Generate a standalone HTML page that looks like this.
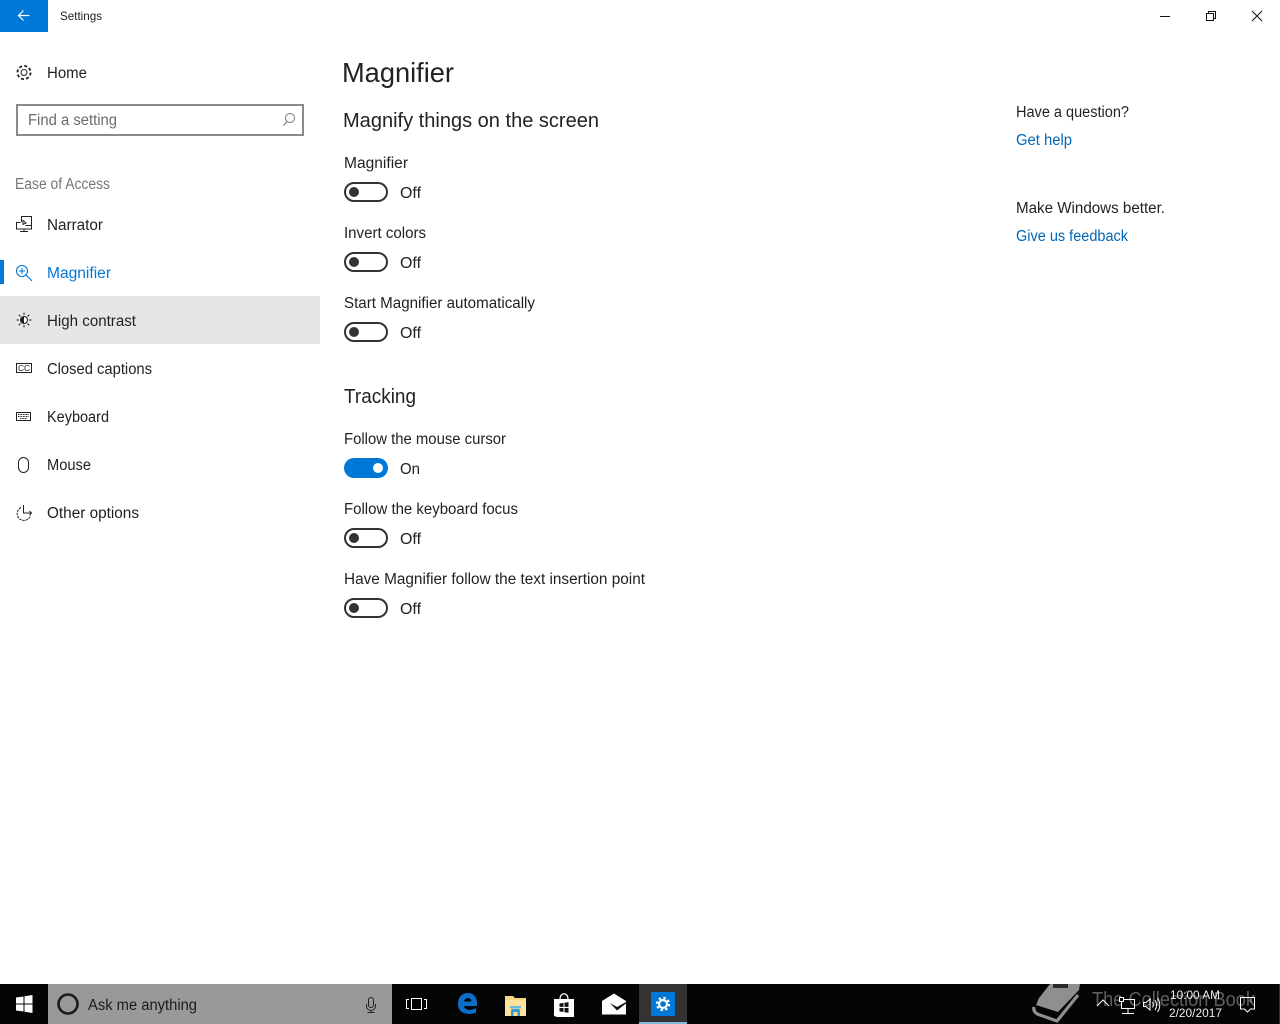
<!DOCTYPE html>
<html lang="en"><head><meta charset="utf-8"><title>Settings</title>
<style>
html,body{margin:0;padding:0;background:#fff;width:1280px;height:1024px;overflow:hidden}
svg{display:block;font-family:"Liberation Sans",sans-serif;font-size:15.5px;fill:#222}
.i{fill:none;stroke:#222;stroke-width:1}
.w{fill:none;stroke:#fff;stroke-width:1}
.off{fill:none;stroke:#333;stroke-width:2}
</style></head><body>
<svg width="1280" height="1024" viewBox="0 0 1280 1024" xmlns="http://www.w3.org/2000/svg">
<!-- title bar -->
<rect width="48" height="32" fill="#0078d7"/>
<path d="M29.500 15.500H18.500M23.500 10.500L18.500 15.500L23.500 20.500" fill="none" stroke="#fff" stroke-width="1.200"/>
<text x="60" y="20" font-size="12" textLength="42" lengthAdjust="spacingAndGlyphs">Settings</text>
<path d="M1160 16.500H1170" stroke="#111" stroke-width="1"/>
<path d="M1206.500 13.500h7v7h-7zM1208.500 13.500v-2h7v7h-2" fill="none" stroke="#111" stroke-width="1"/>
<path d="M1252 11l10 10M1262 11l-10 10" stroke="#111" stroke-width="1"/>
<!-- nav -->
<circle cx="24" cy="72.500" r="6.600" fill="none" stroke="#222" stroke-width="1.800" stroke-dasharray="3 2.180"/>
<circle cx="24" cy="72.500" r="3" class="i"/>
<text x="47" y="78" textLength="40" lengthAdjust="spacingAndGlyphs">Home</text>
<rect x="17" y="105" width="286" height="30" fill="#fff" stroke="#8a8a8a" stroke-width="2"/>
<text x="28" y="125" fill="#6b6b6b" textLength="89" lengthAdjust="spacingAndGlyphs">Find a setting</text>
<circle cx="290" cy="118" r="4.500" fill="none" stroke="#777"/><path d="M287 121.500L283.500 125.500" stroke="#777"/>
<text x="15" y="189" fill="#767676" textLength="95" lengthAdjust="spacingAndGlyphs">Ease of Access</text>

<path d="M21.500 222v-5.500h10v9h-6" class="i"/>
<path d="M20.500 222.500h-4v6.500h15v-3M24 229v2.500M20 231.500h8M23 220.500l3 2.500-3 1.500z" class="i"/>
<text x="47" y="230" textLength="56" lengthAdjust="spacingAndGlyphs">Narrator</text>

<rect x="0" y="260" width="4" height="24" fill="#0078d7"/>
<circle cx="22" cy="271" r="5.500" fill="none" stroke="#0078d7" stroke-width="1.100"/>
<path d="M19 271h6M22 268v6M26 275l6 6" fill="none" stroke="#0078d7" stroke-width="1.100"/>
<text x="47" y="278" fill="#0078d7" textLength="64" lengthAdjust="spacingAndGlyphs">Magnifier</text>

<rect x="0" y="296" width="320" height="48" fill="#e6e6e6"/>
<circle cx="24" cy="320" r="3.500" fill="#fff" stroke="#222"/><path d="M24 316.500a3.500 3.500 0 0 0 0 7z" fill="#222"/>
<path d="M24 312.500v2.500M24 325v2.500M16.500 320h2.500M29 320h2.500M18.700 314.700l1.800 1.800M27.500 323.500l1.800 1.800M18.700 325.300l1.800-1.800M27.500 316.500l1.800-1.800" stroke="#222" stroke-width="1"/>
<text x="47" y="326" textLength="89" lengthAdjust="spacingAndGlyphs">High contrast</text>

<rect x="16.500" y="363.500" width="15" height="9" class="i"/>
<text x="18" y="371" font-size="8" textLength="12" lengthAdjust="spacingAndGlyphs">CC</text>
<text x="47" y="374" textLength="105" lengthAdjust="spacingAndGlyphs">Closed captions</text>

<rect x="16.500" y="412.500" width="14" height="8" class="i"/>
<path d="M18 414.500h11M18 416.500h11M20 418.500h7" stroke="#222" stroke-dasharray="1 .6"/>
<text x="47" y="422" textLength="62" lengthAdjust="spacingAndGlyphs">Keyboard</text>

<rect x="18.500" y="457.500" width="10" height="15" rx="5" class="i"/>
<text x="47" y="470" textLength="44" lengthAdjust="spacingAndGlyphs">Mouse</text>

<path d="M21 507.500a6.800 6.800 0 1 0 9.500 8" class="i" stroke-dasharray="2.500 .8"/>
<path d="M23.500 505v8h8M29.500 511l2 2-2 2" class="i"/>
<text x="47" y="518" textLength="92" lengthAdjust="spacingAndGlyphs">Other options</text>

<!-- main -->
<text x="342" y="82" font-size="28" textLength="112" lengthAdjust="spacingAndGlyphs">Magnifier</text>
<text x="343" y="127" font-size="20" textLength="256" lengthAdjust="spacingAndGlyphs">Magnify things on the screen</text>

<text x="344" y="168" textLength="64" lengthAdjust="spacingAndGlyphs">Magnifier</text>
<rect x="345" y="183" width="42" height="18" rx="9" class="off"/><circle cx="354" cy="192" r="5" fill="#333"/>
<text x="400" y="198" textLength="21" lengthAdjust="spacingAndGlyphs">Off</text>

<text x="344" y="238" textLength="82" lengthAdjust="spacingAndGlyphs">Invert colors</text>
<rect x="345" y="253" width="42" height="18" rx="9" class="off"/><circle cx="354" cy="262" r="5" fill="#333"/>
<text x="400" y="268" textLength="21" lengthAdjust="spacingAndGlyphs">Off</text>

<text x="344" y="308" textLength="191" lengthAdjust="spacingAndGlyphs">Start Magnifier automatically</text>
<rect x="345" y="323" width="42" height="18" rx="9" class="off"/><circle cx="354" cy="332" r="5" fill="#333"/>
<text x="400" y="338" textLength="21" lengthAdjust="spacingAndGlyphs">Off</text>

<text x="344" y="403" font-size="20" textLength="72" lengthAdjust="spacingAndGlyphs">Tracking</text>

<text x="344" y="444" textLength="162" lengthAdjust="spacingAndGlyphs">Follow the mouse cursor</text>
<rect x="344" y="458" width="44" height="20" rx="10" fill="#0078d7"/><circle cx="378" cy="468" r="5" fill="#fff"/>
<text x="400" y="474" textLength="20" lengthAdjust="spacingAndGlyphs">On</text>

<text x="344" y="514" textLength="174" lengthAdjust="spacingAndGlyphs">Follow the keyboard focus</text>
<rect x="345" y="529" width="42" height="18" rx="9" class="off"/><circle cx="354" cy="538" r="5" fill="#333"/>
<text x="400" y="544" textLength="21" lengthAdjust="spacingAndGlyphs">Off</text>

<text x="344" y="584" textLength="301" lengthAdjust="spacingAndGlyphs">Have Magnifier follow the text insertion point</text>
<rect x="345" y="599" width="42" height="18" rx="9" class="off"/><circle cx="354" cy="608" r="5" fill="#333"/>
<text x="400" y="614" textLength="21" lengthAdjust="spacingAndGlyphs">Off</text>

<!-- right -->
<text x="1016" y="117" textLength="113" lengthAdjust="spacingAndGlyphs">Have a question?</text>
<text x="1016" y="145" fill="#0067b8" textLength="56" lengthAdjust="spacingAndGlyphs">Get help</text>
<text x="1016" y="213" textLength="149" lengthAdjust="spacingAndGlyphs">Make Windows better.</text>
<text x="1016" y="241" fill="#0067b8" textLength="112" lengthAdjust="spacingAndGlyphs">Give us feedback</text>

<!-- taskbar -->
<rect y="984" width="1280" height="40" fill="#050508"/>
<path d="M16 997.500l7.500-1v7h-7.500zM24.500 996.300l8-1.300v8.500h-8zM16 1004.500h7.500v7l-7.500-1zM24.500 1004.500h8v8.500l-8-1.300z" fill="#fff"/>
<rect x="48" y="984" width="344" height="40" fill="#999"/>
<circle cx="68" cy="1004" r="9.500" fill="none" stroke="#1c1c1c" stroke-width="2.600"/>
<text x="88" y="1010" fill="#1a1a1a" textLength="109" lengthAdjust="spacingAndGlyphs">Ask me anything</text>
<rect x="368.500" y="997.500" width="5" height="10" rx="2.500" fill="none" stroke="#222"/>
<path d="M366.500 1004v2a4.500 4.500 0 0 0 9 0v-2M371 1010.500v2M367.500 1012.500h7" fill="none" stroke="#222"/>

<path d="M411.500 998.500h10v11h-10z" class="w"/>
<path d="M409 999.500h-2.500v9h2.500M424 999.500h2.500v9H424" class="w"/>

<path d="M458 1004c0-7 4-11 10-11 6 0 9 4.500 9 10.500v2.500h-13c.3 3.500 6 5.500 12 2v4.600c-8 3.200-18 1-18-8.600zm6-2.500h7.500c-.3-4.500-6.700-4.500-7.500 0z" fill="#0a6ec9" fill-rule="evenodd"/>

<path d="M505 996h8l2 2h11v18h-21z" fill="#f5d77f"/>
<rect x="505" y="1000" width="21" height="16" fill="#fbe39a"/>
<path d="M511 1016v-5a2 2 0 0 1 2-2h5a2 2 0 0 1 2 2v5h-2.500v-4h-4v4z" fill="#3c9ad0"/>
<rect x="510" y="1006" width="11" height="2.500" fill="#6dbbdc"/>

<path d="M554 999h20v18l-17 0-3-1z" fill="#fff"/>
<path d="M560 999c0-7 8-7 8 0" fill="none" stroke="#fff" stroke-width="1.200"/>
<path d="M559.500 1003.500l4-.6v4h-4zM564.500 1002.700l4-.6v4.800h-4zM559.500 1008h4v4l-4-.6zM564.500 1008h4v4.800l-4-.6z" fill="#111"/>

<path d="M602 1001l12-7.500 12 7.500v13.500h-24z" fill="#fff"/>
<path d="M610 1003l7 4 9-5v1.500l-9 7z" fill="#111"/>

<rect x="639" y="984" width="48" height="40" fill="#333336"/>
<rect x="651" y="992" width="24" height="24" fill="#0078d7"/>
<circle cx="663" cy="1004" r="4" fill="none" stroke="#fff" stroke-width="2.200"/>
<circle cx="663" cy="1004" r="6.200" fill="none" stroke="#fff" stroke-width="2" stroke-dasharray="2.400 2.500"/>
<rect x="639" y="1022" width="48" height="2" fill="#86b9e0"/>

<!-- watermark -->
<path d="M1050 984h30l-1 6-21 22-22-7 3-7z" fill="#8f8f8f"/>
<rect x="1053" y="984" width="15" height="4" fill="#2a2a2a"/>
<path d="M1034 1007c-1 4 2 7 6 8l17 6 21-26" fill="none" stroke="#8f8f8f" stroke-width="3.200"/>
<text x="1092" y="1006" font-size="20" fill="#5e5e5e" textLength="163" lengthAdjust="spacingAndGlyphs">The Collection Book</text>
<!-- tray -->
<path d="M1097 1006l6-6 6 6" class="w"/>
<path d="M1121.500 999.500h13v9h-13zM1128 1008.500v5M1122 1013.500h12" class="w"/>
<rect x="1119.500" y="997.500" width="4" height="4" fill="#050508" stroke="#fff"/>
<path d="M1143.500 1002.500h2.500l4-3.500v11l-4-3.500h-2.500zM1152.500 1002c1 1.500 1 4 0 5.500M1155 1000c2 3 2 7 0 10M1157.500 998c3 4 3 10 0 14" class="w" stroke-width=".9"/>
<text x="1170" y="999" font-size="12" fill="#eee" textLength="50" lengthAdjust="spacingAndGlyphs">10:00 AM</text>
<text x="1169" y="1017" font-size="12" fill="#eee" textLength="53" lengthAdjust="spacingAndGlyphs">2/20/2017</text>
<path d="M1240.500 997.500h14v11.500h-4l-3 3-3-3h-4z" class="w"/>
<path d="M1251 999v4" stroke="#aaa"/>
<rect x="1279" y="984" width="1" height="40" fill="#333"/>
</svg>
</body></html>
